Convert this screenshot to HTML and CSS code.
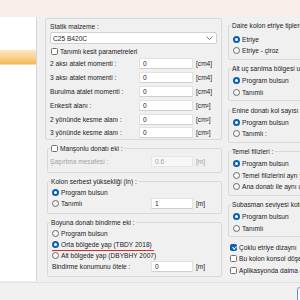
FILE: index.html
```html
<!DOCTYPE html>
<html lang="tr">

<head>
  <meta charset="utf-8">
  <link rel="stylesheet" href="styles.css">
</head>

<body>
  <div class="titlebar"></div>
  <div class="main">
    <div class="side">
      <div class="side-item"></div>
    </div>
    <div class="content">
      <!-- sol sütun -->
      <div class="col-left">
        <div class="panel">
          <div class="caption">Statik malzeme :</div>
          <div class="select">
            <span>C25 B420C</span>
            <svg width="7" height="4" viewBox="0 0 7 4"><polyline points="0.5,0.5 3.5,3.5 6.5,0.5" fill="none" stroke="#5c5c5c" stroke-width="0.8"/></svg>
          </div>
          <div class="opt"><span class="check"></span>Tanımlı kesit parametreleri</div>
          <div class="field"><span class="name">2 aksı atalet momenti :</span><span class="input">0</span><span class="unit">[cm4]</span></div>
          <div class="field"><span class="name">3 aksı atalet momenti :</span><span class="input">0</span><span class="unit">[cm4]</span></div>
          <div class="field"><span class="name">Burulma atalet momenti :</span><span class="input">0</span><span class="unit">[cm4]</span></div>
          <div class="field"><span class="name">Enkesit alanı :</span><span class="input">0</span><span class="unit">[cm²]</span></div>
          <div class="field"><span class="name">2 yönünde kesme alanı :</span><span class="input">0</span><span class="unit">[cm²]</span></div>
          <div class="field"><span class="name">3 yönünde kesme alanı :</span><span class="input">0</span><span class="unit">[cm²]</span></div>
        </div>

        <fieldset class="group">
          <legend><span class="check"></span>Manşonlu donatı eki :</legend>
          <div class="field off"><span class="name">Şaşırtma mesafesi :</span><span class="input">0.6</span><span class="unit">[m]</span></div>
        </fieldset>

        <fieldset class="group">
          <legend>Kolon serbest yüksekliği (ln) :</legend>
          <div class="opt"><span class="radio on"></span>Program bulsun</div>
          <div class="field"><span class="name"><span class="radio"></span>Tanımlı</span><span class="input">1</span><span class="unit">[m]</span></div>
        </fieldset>

        <fieldset class="group">
          <legend>Boyuna donatı bindirme eki :</legend>
          <div class="opt"><span class="radio"></span>Program bulsun</div>
          <div class="opt"><span class="mark"><span class="radio on"></span>Orta bölgede yap (TBDY 2018)</span></div>
          <div class="opt"><span class="radio"></span>Alt bölgede yap (DBYBHY 2007)</div>
          <div class="field"><span class="name">Bindirme konumunu ötele :</span><span class="input">0</span><span class="unit">[m]</span></div>
        </fieldset>
      </div>

      <!-- sağ sütun -->
      <div class="col-right">
        <fieldset class="group first">
          <legend>Daire kolon etriye tipleri :</legend>
          <div class="opt"><span class="radio on"></span>Etriye</div>
          <div class="opt"><span class="radio"></span>Etriye - çiroz</div>
        </fieldset>
        <fieldset class="group">
          <legend>Alt uç sarılma bölgesi uzunluğu :</legend>
          <div class="opt"><span class="radio on"></span>Program bulsun</div>
          <div class="opt"><span class="radio"></span>Tanımlı</div>
        </fieldset>
        <fieldset class="group">
          <legend>Enine donatı kol sayısı :</legend>
          <div class="opt"><span class="radio on"></span>Program bulsun</div>
          <div class="opt"><span class="radio"></span>Tanımlı :</div>
        </fieldset>
        <fieldset class="group">
          <legend>Temel filizleri :</legend>
          <div class="opt"><span class="radio on"></span>Program bulsun</div>
          <div class="opt"><span class="radio"></span>Temel filizlerini ayrı yap</div>
          <div class="opt"><span class="radio"></span>Ana donatı ile aynı çubuk</div>
        </fieldset>
        <fieldset class="group">
          <legend>Subasman seviyesi kotu :</legend>
          <div class="opt"><span class="radio on"></span>Program bulsun</div>
          <div class="opt"><span class="radio"></span>Tanımlı</div>
        </fieldset>
        <div class="checks">
          <div class="opt"><span class="check on"></span>Çoklu etriye dizaynı</div>
          <div class="opt"><span class="check"></span>Bu kolon konsol döşeme</div>
          <div class="opt"><span class="check"></span>Aplikasyonda daima çiz</div>
        </div>
      </div>
    </div>
  </div>
  <div class="footer"><span class="btn"></span></div>
</body>

</html>
```

FILE: styles.css
```css
* {
  box-sizing: border-box;
}

html,
body {
  margin: 0;
}

body {
  width: 300px;
  height: 300px;
  overflow: hidden;
  background: #f0f0f0;
  font: 6.6px/11px "Liberation Sans", Arial, sans-serif;
  color: #1b1b1b;
}
/* frame */

.titlebar {
  height: 16px;
  background: #f9eeea;
}

.main {
  display: flex;
  height: 266px;
}

.side {
  width: 37px;
  flex-shrink: 0;
  margin: 1px 0;
  background: #fff;
  border-right: 1px solid #d6d6d6;
}

.side-item {
  height: 15px;
  margin-top: 33px;
  background: linear-gradient(#fde6bd, #fad08f 55%, #f5b752);
  border-bottom: 1px solid #f9d9a4;
}

.content {
  flex: 1;
  min-width: 0;
  display: flex;
  padding: 3px 0 0 8px;
  overflow: hidden;
}

.col-left {
  width: 177px;
  flex-shrink: 0;
}

.col-right {
  width: 110px;
  margin-left: 6px;
  flex-shrink: 0;
}

.footer {
  height: 18px;
  border-top: 1px solid #e1e1e1;
  display: flex;
  justify-content: flex-end;
  padding-top: 4px;
}

.btn {
  width: 40px;
  height: 16px;
  margin-right: -37px;
  border: 1px solid #5b95d4;
  border-radius: 3px;
  background: #fdfdfd;
}
/* boxes */

.panel {
  height: 122px;
  margin-top: -1px;
  padding: 1px 4px 0;
  border: 1px solid #d9d9d9;
  border-radius: 2px;
}

.group {
  min-width: 0;
  margin: 3px 0 0 2px;
  padding: 0 2px 4px;
  border: 1px solid #d9d9d9;
  border-radius: 2px;
}

.group legend {
  display: flex;
  align-items: center;
  padding: 0 1px;
  white-space: nowrap;
}

.col-right .group {
  margin: 3.5px 0 0;
  padding: 1px 2px 2px;
}

.col-right .group.first {
  margin-top: 1px;
  padding-top: 2.5px;
}

.col-right .opt {
  height: 11.5px;
  padding-left: 4px;
}

.checks {
  margin-top: 4.5px;
}

.checks .opt {
  padding-left: 2px;
}
/* controls */

.caption {
  height: 12px;
  padding-top: 1px;
}

.select {
  display: flex;
  align-items: center;
  justify-content: space-between;
  height: 12px;
  padding: 0 3px 0 2px;
  background: #fff;
  border: 1px solid #d0d0d0;
  border-radius: 2px;
}

.opt {
  display: flex;
  align-items: center;
  height: 11px;
  white-space: nowrap;
}

.group .opt {
  padding-left: 2px;
}

.panel .opt {
  margin-top: 2px;
  padding-left: 1px;
}

.field {
  display: flex;
  align-items: center;
  height: 13.8px;
  white-space: nowrap;
}

.field .name {
  display: flex;
  align-items: center;
  width: 89px;
}

.group .field {
  height: 12px;
  margin-top: 1.5px;
}

.group .field .name {
  width: 101px;
}

.group .opt + .field {
  height: 11px;
  margin-top: 0;
}

.group .opt + .field .name {
  padding-left: 2px;
}

.input {
  width: 54px;
  height: 11px;
  padding-left: 3px;
  line-height: 9px;
  background: #fff;
  border: 1px solid #e2e2e2;
  border-bottom-color: #cfcfcf;
  border-radius: 1px;
}

.group .input {
  width: 42px;
}

.unit {
  margin-left: 3px;
}

.off {
  color: #a3a3a3;
}

.off .input {
  background: #f7f7f7;
  border-color: #e6e6e6;
}

.radio {
  width: 7px;
  height: 7px;
  margin-right: 2px;
  flex-shrink: 0;
  border: 1px solid #6a6a6a;
  border-radius: 50%;
  background: #f8f8f8;
}

.radio.on {
  border: 2px solid #0a5fb4;
  background: #fff;
}

.check {
  position: relative;
  width: 7px;
  height: 7px;
  margin-right: 2px;
  flex-shrink: 0;
  border: 1px solid #707070;
  border-radius: 1.5px;
  background: #fdfdfd;
}

.check.on {
  border-color: #0a5fb4;
  background: #0a5fb4;
}

.check.on::after {
  content: "";
  position: absolute;
  left: 1.6px;
  top: 0;
  width: 1.6px;
  height: 3.4px;
  border: solid #fff;
  border-width: 0 0.9px 0.9px 0;
  transform: rotate(45deg);
}
/* kırmızı işaret */

.mark {
  position: relative;
  display: flex;
  align-items: center;
}

.mark::after {
  content: "";
  position: absolute;
  left: 0;
  right: -2px;
  bottom: -1.8px;
  height: 1.6px;
  background: #e2252c;
}
```
